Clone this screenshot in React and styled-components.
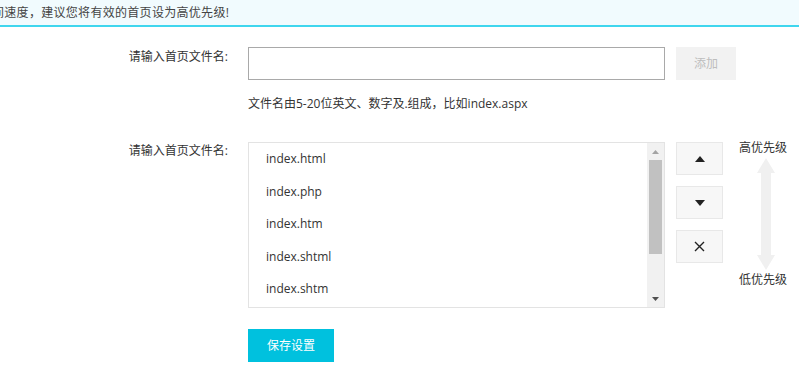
import React from 'react';
import styled, { createGlobalStyle } from 'styled-components';

const GlobalStyle = createGlobalStyle`
    html, body {
        margin: 0;
        padding: 0;
        background: #fff;
    }
    body {
        font-family: "Open Sans", "Noto Sans CJK SC", sans-serif;
        font-size: 12px;
        color: #333;
        overflow: hidden;
    }
`;

const files = ['index.html', 'index.php', 'index.htm', 'index.shtml', 'index.shtm', 'default.html', 'default.htm'];

const App = () => (
    <Page>
        <GlobalStyle />
        <Notice>
            <NoticeText>间速度，建议您将有效的首页设为高优先级!</NoticeText>
        </Notice>
        <Form>
            <Row>
                <Label>请输入首页文件名:</Label>
                <Field>
                    <InputLine>
                        <TextInput type="text" />
                        <AddButton disabled>添加</AddButton>
                    </InputLine>
                    <Hint>文件名由5-20位英文、数字及.组成，比如index.aspx</Hint>
                </Field>
            </Row>
            <Row $top={28}>
                <Label $shift={-1}>请输入首页文件名:</Label>
                <Field>
                    <ListLine>
                        <ListBox>
                            <Items>
                                {files.map(name => <Item key={name}>{name}</Item>)}
                            </Items>
                            <Scrollbar>
                                <ScrollArrow>
                                    <svg width="7" height="4" viewBox="0 0 7 4"><path d="M0 4 L3.5 0 L7 4 Z" fill="#a3a3a3" /></svg>
                                </ScrollArrow>
                                <Track>
                                    <Thumb />
                                </Track>
                                <ScrollArrow>
                                    <svg width="7" height="4" viewBox="0 0 7 4"><path d="M0 0 L3.5 4 L7 0 Z" fill="#505050" /></svg>
                                </ScrollArrow>
                            </Scrollbar>
                        </ListBox>
                        <Tools>
                            <ToolButton title="上移">
                                <svg width="10" height="6" viewBox="0 0 10 6"><path d="M0 6 L5 0 L10 6 Z" fill="#222" /></svg>
                            </ToolButton>
                            <ToolButton title="下移">
                                <svg width="10" height="6" viewBox="0 0 10 6"><path d="M0 0 L5 6 L10 0 Z" fill="#222" /></svg>
                            </ToolButton>
                            <ToolButton title="删除">
                                <svg width="11" height="11" viewBox="0 0 11 11"><path d="M1 1 L10 10 M10 1 L1 10" stroke="#222" strokeWidth="1.4" /></svg>
                            </ToolButton>
                        </Tools>
                        <Priority>
                            <PriorityText>高优先级</PriorityText>
                            <svg width="18" height="112" viewBox="0 0 18 112">
                                <path d="M9 0 L18 15 L14 15 L14 97 L18 97 L9 112 L0 97 L4 97 L4 15 L0 15 Z" fill="#f0f0f0" />
                            </svg>
                            <PriorityText>低优先级</PriorityText>
                        </Priority>
                    </ListLine>
                    <SaveButton>保存设置</SaveButton>
                </Field>
            </Row>
        </Form>
    </Page>
);

const Page = styled.div`
    width: 799px;
    height: 369px;
    overflow: hidden;
`;

const Notice = styled.div`
    height: 25px;
    background: #f1fbfe;
    border-bottom: 2px solid #3fd6ee;
    overflow: hidden;
`;

const NoticeText = styled.div`
    margin-left: -8px;
    line-height: 25px;
    letter-spacing: 0.3px;
    color: #444;
    white-space: nowrap;
`;

const Form = styled.div`
    padding-top: 20px;
`;

const Row = styled.div`
    display: grid;
    grid-template-columns: 228px 1fr;
    column-gap: 20px;
    margin-top: ${p => p.$top || 0}px;
`;

const Label = styled.div`
    text-align: right;
    line-height: 20px;
    margin-top: ${p => p.$shift || 0}px;
    color: #333;
`;

const Field = styled.div`
    display: flex;
    flex-direction: column;
    align-items: flex-start;
`;

const InputLine = styled.div`
    display: flex;
    gap: 11px;
`;

const TextInput = styled.input`
    box-sizing: border-box;
    width: 417px;
    height: 33px;
    border: 1px solid #a9a9a9;
    padding: 0 10px;
    font: inherit;
    outline: none;
`;

const AddButton = styled.button`
    width: 60px;
    height: 33px;
    border: none;
    background: #f2f2f2;
    color: #bdbdbd;
    font: inherit;
    line-height: 33px;
    padding: 0;
`;

const Hint = styled.div`
    margin-top: 14px;
    line-height: 20px;
    color: #333;
`;

const ListLine = styled.div`
    display: flex;
    align-items: flex-start;
`;

const ListBox = styled.div`
    box-sizing: border-box;
    width: 417px;
    height: 166px;
    border: 1px solid #e3e3e3;
    display: flex;
    overflow: hidden;
`;

const Items = styled.ul`
    flex: 1;
    list-style: none;
    margin: 0;
    padding: 0;
    overflow: hidden;
`;

const Item = styled.li`
    height: 32.5px;
    line-height: 32.5px;
    padding-left: 17px;
    color: #333;
`;

const Scrollbar = styled.div`
    width: 17px;
    background: #f1f1f1;
    display: flex;
    flex-direction: column;
`;

const ScrollArrow = styled.div`
    height: 17px;
    display: flex;
    align-items: center;
    justify-content: center;
`;

const Track = styled.div`
    flex: 1;
    padding: 0 2px;
`;

const Thumb = styled.div`
    height: 94px;
    background: #c1c1c1;
`;

const Tools = styled.div`
    display: flex;
    flex-direction: column;
    gap: 11px;
    margin-left: 11px;
`;

const ToolButton = styled.button`
    box-sizing: border-box;
    width: 47px;
    height: 33px;
    border: 1px solid #e8e8e8;
    background: #f7f7f7;
    padding: 0;
    display: flex;
    align-items: center;
    justify-content: center;
`;

const Priority = styled.div`
    display: flex;
    flex-direction: column;
    align-items: center;
    width: 52px;
    margin-left: 14px;
    margin-top: -2px;
    gap: 2px;
    svg {
        margin-left: 5px;
    }
`;

const PriorityText = styled.div`
    line-height: 16px;
    color: #333;
    white-space: nowrap;
`;

const SaveButton = styled.button`
    margin-top: 21px;
    width: 86px;
    height: 33px;
    border: none;
    background: #00c1de;
    color: #fff;
    font: inherit;
    line-height: 33px;
    padding: 0;
`;

export default App;
